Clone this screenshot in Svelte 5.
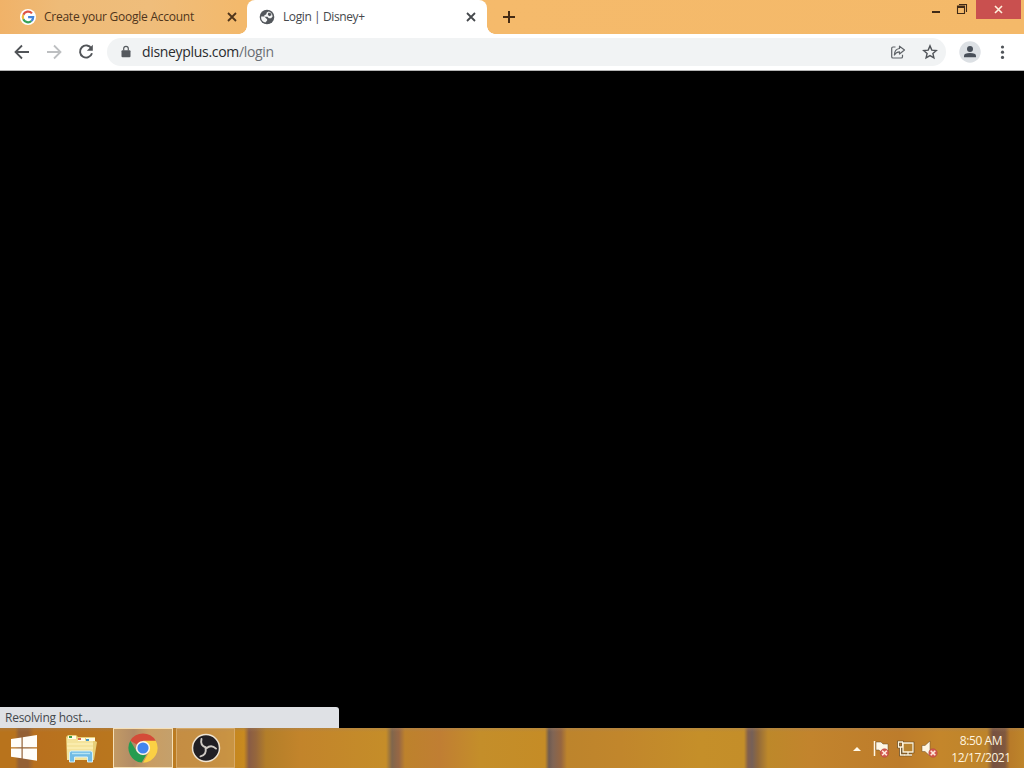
<script>
    let tabs = [
        { title: 'Create your Google Account', icon: 'google', active: false },
        { title: 'Login | Disney+', icon: 'globe', active: true }
    ];

    let host = 'disneyplus.com';
    let path = '/login';
    let status = 'Resolving host...';
    let time = '8:50 AM';
    let date = '12/17/2021';
</script>

<style>
    :global(body) {
        margin: 0;
        overflow: hidden;
    }

    .screen {
        width: 1024px;
        height: 768px;
        display: flex;
        flex-direction: column;
        background: #000;
        font-family: "Open Sans", "Noto Sans", sans-serif;
        font-size: 12px;
        overflow: hidden;
    }

    svg {
        display: block;
        flex: none;
    }

    .tabstrip {
        height: 34px;
        display: flex;
        background: linear-gradient(90deg, #f0b268 0, #eebb78 60px, #efbd7b 150px, #f3b96c 240px, #f5ba6b 500px, #f4b969 100%);
    }

    .tab {
        box-sizing: border-box;
        height: 34px;
        display: flex;
        align-items: center;
        color: #4f351b;
        white-space: nowrap;
    }

    .tab.google {
        width: 247px;
        padding: 0 9px 0 20px;
        letter-spacing: -0.25px;
    }

    .tab.globe {
        width: 240px;
        padding: 0 10px 0 12px;
        letter-spacing: -0.4px;
    }

    .tab.active {
        position: relative;
        background: #fff;
        color: #45484c;
        border-radius: 8px 8px 0 0;
    }

    .tab.active::before,
    .tab.active::after {
        content: "";
        position: absolute;
        bottom: 0;
        width: 8px;
        height: 8px;
    }

    .tab.active::before {
        left: -8px;
        background: radial-gradient(circle at 0 0, transparent 7.5px, #fff 8px);
    }

    .tab.active::after {
        right: -8px;
        background: radial-gradient(circle at 100% 0, transparent 7.5px, #fff 8px);
    }

    .title {
        flex: 1;
        margin-left: 8px;
        line-height: 16px;
    }

    .newtab {
        margin: 10px 0 0 15px;
    }

    .controls {
        display: flex;
        margin-left: auto;
        height: 19px;
    }

    .controls .close {
        width: 45px;
        height: 19px;
        margin-left: 8px;
        margin-right: 3px;
        background: #c9504f;
        display: flex;
        align-items: center;
        justify-content: center;
    }

    .toolbar {
        height: 37px;
        box-sizing: border-box;
        display: flex;
        align-items: center;
        padding: 0 12px 0 13px;
        background: #fff;
        border-bottom: 1px solid #b4b4b4;
    }

    .toolbar .nav {
        display: flex;
        gap: 14px;
    }

    .omnibox {
        flex: 1;
        height: 28px;
        margin: 0 13px 0 12px;
        padding: 0 8px 0 11px;
        border-radius: 14px;
        background: #f1f3f4;
        display: flex;
        align-items: center;
        font-size: 14px;
        letter-spacing: -0.32px;
        color: #2a2c2f;
    }

    .url {
        flex: 1;
        margin-left: 8px;
        line-height: 20px;
    }

    .path {
        color: #6b6f74;
    }

    .omnibox svg + svg {
        margin-left: 16px;
    }

    .avatar {
        margin-right: 11px;
    }

    .page {
        flex: 1;
        display: flex;
        align-items: flex-end;
        background: #000;
    }

    .status {
        width: 339px;
        height: 21px;
        box-sizing: border-box;
        padding-left: 5px;
        line-height: 22px;
        background: #dfe1e5;
        color: #44484d;
        border-top-right-radius: 3px;
        letter-spacing: -0.25px;
    }

    .taskbar {
        height: 40px;
        display: flex;
        background:
            linear-gradient(180deg, rgba(160, 130, 100, 0.35) 0, transparent 4px),
            linear-gradient(90deg,
                #b8731c 0, #b8731c 15px, #936035 19px, #936035 28px, #b8701e 34px,
                #b9761e 110px, #bd7e22 210px, #c88a1f 244px, #895c45 249px, #95663c 256px,
                #b37e29 266px, #c2842b 300px, #c58d29 386px, #80664c 392px, #986744 399px,
                #bd822c 405px, #c07e33 440px, #c48e2a 480px, #c58c26 545px, #6f5b51 549px,
                #806555 553px, #966640 561px, #bd842c 567px, #c1862c 620px, #c58f29 700px,
                #c48e29 744px, #83604c 748px, #756058 752px, #91693b 758px, #bd882a 768px,
                #c2842d 810px, #bd7c2b 900px, #c4862b 940px, #bd842b 987px, #755141 993px,
                #80583e 1005px, #b87b29 1010px, #be852a 100%);
    }

    .start {
        margin: 6px 0 0 10px;
    }

    .explorer {
        margin: 6px 0 0 27px;
    }

    .app {
        box-sizing: border-box;
        width: 59px;
        height: 40px;
        border: 1px solid #d6a968;
        background: rgba(210, 170, 120, 0.4);
        display: flex;
        align-items: center;
        justify-content: center;
    }

    .app.current {
        width: 60px;
        margin: 0 3px 0 16px;
        border-color: #f5dfb6;
        background: linear-gradient(90deg, #c29a65 0, #b18b66 20px, #c99d62 35px, #c4a06c 100%);
    }

    .tray {
        margin-left: auto;
        display: flex;
        align-items: center;
    }

    .clock {
        width: 76px;
        margin: 0 5px 0 4px;
        padding-top: 1px;
        color: #fff4df;
        text-align: center;
        line-height: 17px;
        letter-spacing: -0.42px;
    }
</style>

<div class="screen">
    <div class="tabstrip">
        {#each tabs as tab}
            <div class="tab {tab.icon}" class:active={tab.active}>
                {#if tab.icon === 'google'}
                    <svg width="16" height="16" viewBox="0 0 16 16" fill="none" stroke-width="2.2">
                        <circle cx="8" cy="8" r="8" fill="#fff" />
                        <path d="M12 4.4A5.2 5.2 0 0 0 3.3 5.8" stroke="#dd5144" />
                        <path d="M3.3 5.8a5.2 5.2 0 0 0 0 4.5" stroke="#edbb3d" />
                        <path d="M3.3 10.3a5.2 5.2 0 0 0 8.1 1.7" stroke="#36a056" />
                        <path d="M11.4 12A5.2 5.2 0 0 0 13.2 8.1H8.1" stroke="#4584d8" />
                    </svg>
                {:else}
                    <svg width="16" height="16" viewBox="0 0 16 16">
                        <circle cx="8" cy="8" r="7.3" fill="#53575c" />
                        <path d="M9.8 2.4Q7 3.2 7.3 5.2L5.2 6.4v1.4h3.2l1.4 1.4h2.3l1.5-1.8A5.8 5.8 0 0 0 9.8 2.4z" fill="#f7f8f8" />
                        <path d="M2.1 7.6h3.2l2.8 2.6v1.2l-1.7 2.2A5.8 5.8 0 0 1 2.1 7.6z" fill="#f7f8f8" />
                        <path d="M9.2 3.8h2.2L12.6 6l-2 1.3L8.8 6z" fill="#53575c" />
                    </svg>
                {/if}
                <span class="title">{tab.title}</span>
                <svg width="12" height="12" viewBox="0 0 12 12" stroke="currentColor" stroke-width="1.8">
                    <path d="m2 2 8 8M10 2l-8 8" />
                </svg>
            </div>
        {/each}
        <svg class="newtab" width="14" height="14" viewBox="0 0 14 14" stroke="#452b14" stroke-width="2">
            <path d="M7 1v12M1 7h12" />
        </svg>
        <div class="controls">
            <svg width="38" height="19" viewBox="0 0 38 19" fill="none" stroke="#402a17">
                <path d="M2 12h8" stroke-width="2" />
                <path d="M34.5 6v7.5h-7V6zM29 4.5h7.5V12" stroke-width="1.1" />
                <path d="M27 7h8" stroke-width="2" />
            </svg>
            <div class="close">
                <svg width="9" height="9" viewBox="0 0 9 9" stroke="#fff0dd" stroke-width="1.6">
                    <path d="m1 1 7 7M8 1 1 8" />
                </svg>
            </div>
        </div>
    </div>

    <div class="toolbar">
        <div class="nav">
            <svg width="18" height="18" viewBox="0 0 18 18" fill="none" stroke="#515458" stroke-width="1.8">
                <path d="M16 9H3M9 2.5 2.5 9 9 15.5" />
            </svg>
            <svg width="18" height="18" viewBox="0 0 18 18" fill="none" stroke="#bdbfc1" stroke-width="1.8">
                <path d="M2 9h13M9 2.5 15.5 9 9 15.5" />
            </svg>
            <svg width="18" height="18" viewBox="0 0 18 18" fill="none" stroke="#515458" stroke-width="1.9">
                <path d="M14.4 5.4A6.1 6.1 0 1 0 15 10.3" />
                <path d="M15.8 1.8v6H9.8z" fill="#515458" stroke="none" />
            </svg>
        </div>
        <div class="omnibox">
            <svg width="16" height="16" viewBox="0 0 16 16" fill="#55595e">
                <path d="M4.5 6.2h7q1 0 1 1v5q0 1-1 1h-7q-1 0-1-1v-5q0-1 1-1z" />
                <path d="M5.7 6.5V4.6a2.3 2.3 0 0 1 4.6 0v1.9" fill="none" stroke="#55595e" stroke-width="1.2" />
            </svg>
            <span class="url">{host}<span class="path">{path}</span></span>
            <svg width="16" height="16" viewBox="0 0 16 16" fill="none" stroke="#5f6368" stroke-width="1.2" stroke-linejoin="round">
                <path d="M5.5 3H3Q1.7 3 1.7 4.3v8.4Q1.7 14 3 14h8.2q1.3 0 1.3-1.3v-1.9" />
                <path d="M9.5 2.2 14.5 6l-5 4V7.8Q6 7.8 4.4 11 4.5 5 9.5 4.5z" />
            </svg>
            <svg width="16" height="16" viewBox="0 0 16 16" fill="none" stroke="#505459" stroke-width="1.4">
                <path d="m8 1.9 1.8 4.2 4.5.4-3.4 3 1 4.4L8 11.6l-3.9 2.3 1-4.4-3.4-3 4.5-.4z" />
            </svg>
        </div>
        <svg class="avatar" width="22" height="22" viewBox="0 0 22 22">
            <circle cx="11" cy="11" r="10.7" fill="#dce0e4" />
            <circle cx="11" cy="8" r="3" fill="#484f59" />
            <path d="M5 16.3v-1.6q0-2.7 6-2.7t6 2.7v1.6z" fill="#484f59" />
        </svg>
        <svg width="20" height="16" viewBox="0 0 20 16" fill="#505459">
            <circle cx="10.5" cy="3" r="1.6" />
            <circle cx="10.5" cy="8.2" r="1.6" />
            <circle cx="10.5" cy="13.4" r="1.6" />
        </svg>
    </div>

    <div class="page">
        <div class="status">{status}</div>
    </div>

    <div class="taskbar">
        <svg class="start" width="28" height="28" viewBox="0 0 28 28" fill="#fffdf8">
            <path d="M1 5 11.5 3.5v9.8H1zM12.7 3.3 27 1v12.3H12.7zM1 14.5h10.5v9.8L1 22.8zM12.7 14.5H27v12.2l-14.3-2.2z" />
        </svg>
        <svg class="explorer" width="32" height="30" viewBox="0 0 32 30">
            <path d="M1 3 3 1h8l2 2h17v4l2 1-3 18H2z" fill="#e9cf77" />
            <path d="M2 4h9l2 2h15v20H2z" fill="#f4e39b" />
            <path d="M3 2h8v3H3zM13 4h7v3h-7zM21 4h9v3h-9z" fill="#fffbe5" />
            <path d="M4 2h3v2H4z" fill="#3e9d48" />
            <path d="M13 4h3v2h-3z" fill="#d8654d" />
            <path d="M21 5h3v2h-3z" fill="#4296c4" />
            <path d="M2 10h26M2 14h26" stroke="#fff4bd" />
            <path d="M4.5 28V19q0-2 2-2h19q2 0 2 2v9h-5v-5h-13v5z" fill="#72bce5" stroke="#d8f1f8" />
            <path d="M7 19.5h18" stroke="#b7e4f4" stroke-width="1.4" />
        </svg>
        <div class="app current">
            <svg width="30" height="30" viewBox="0 0 30 30">
                <path d="M15 15 2.3 7.7A14.7 14.7 0 0 1 27.7 7.7z" fill="#d44b38" />
                <path d="M15 7.7h12.7A14.7 14.7 0 0 1 15 29.7l6.3-11z" fill="#fbd044" />
                <path d="m8.7 18.6 6.3 3.7 3.6-1-4.9 8.3A14.7 14.7 0 0 1 2.3 7.7z" fill="#259c50" />
                <circle cx="15" cy="15" r="7.1" fill="#fff7e9" />
                <circle cx="15" cy="15" r="5.6" fill="#4285ed" />
            </svg>
        </div>
        <div class="app">
            <svg width="30" height="30" viewBox="0 0 30 30">
                <circle cx="15" cy="15" r="13.5" fill="#211f24" stroke="#efe4d2" stroke-width="1.5" />
                <g fill="none" stroke="#d0cbc5" stroke-width="1.9" stroke-linecap="round">
                    <path d="M15 14.5Q8.8 12.5 10.5 6" />
                    <path d="M15 14.5Q8.8 12.5 10.5 6" transform="rotate(120 15 15)" />
                    <path d="M15 14.5Q8.8 12.5 10.5 6" transform="rotate(240 15 15)" />
                </g>
            </svg>
        </div>

        <div class="tray">
            <svg width="90" height="24" viewBox="0 0 90 24" fill="none">
                <path d="m4 15 4-4 4 4z" fill="#fff9e9" />
                <path d="M25.5 5v15" stroke="#fff7e5" stroke-width="1.5" />
                <path d="M27 6h5l2 2h5v8h-7l-2-2h-3z" fill="#fff7e5" stroke="#604a2b" stroke-width=".5" />
                <g stroke="#59411f" stroke-width="2.6">
                    <path d="M54 7h10v9H54zM59 16v3M55 19h8M49.5 6h4v5h-4zM51.5 11v8h4" />
                </g>
                <g stroke="#fff3d9" stroke-width="1.3">
                    <path d="M54 7h10v9H54zM59 16v3M55 19h8" fill="#b88330" />
                    <path d="M49.5 6h4v5h-4zM51.5 11v8h4" />
                </g>
                <path d="M73 9.5h3l5-4.5v15l-5-4.5h-3z" fill="#fff6e3" stroke="#684c2a" stroke-width=".5" />
                <g fill="#d65a51" stroke="#b34740" stroke-width=".6">
                    <circle cx="35.5" cy="17" r="4.2" />
                    <circle cx="84" cy="17" r="4.2" />
                </g>
                <path d="m33.2 14.7 4.6 4.6m0-4.6-4.6 4.6M81.7 14.7l4.6 4.6m0-4.6-4.6 4.6" stroke="#ffe9dc" stroke-width="1.6" />
            </svg>
            <div class="clock">
                <div>{time}</div>
                <div>{date}</div>
            </div>
        </div>
    </div>
</div>
